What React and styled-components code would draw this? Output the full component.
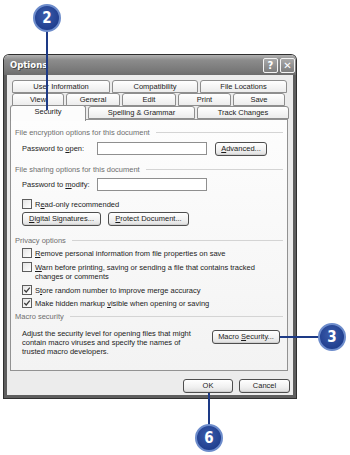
import styled, { createGlobalStyle } from "styled-components";

const GlobalStyle = createGlobalStyle`
  html, body {
    margin: 0;
    padding: 0;
    background: #ffffff;
  }
  * {
    box-sizing: border-box;
  }
`;

const Page = styled.div`
  position: relative;
  width: 350px;
  height: 455px;
  overflow: hidden;
  background: #ffffff;
  font-family: "Liberation Sans", Arial, sans-serif;
  font-size: 7.5px;
  line-height: 9px;
  color: #1c1c1c;
  padding: 55px 0 0 4px;
`;

const Window = styled.div`
  width: 292px;
  height: 343px;
  display: flex;
  flex-direction: column;
  border-radius: 5px 5px 0 0;
  box-shadow: 0 0 0 1px #2f2f2f;
`;

const TitleBar = styled.div`
  height: 20px;
  display: flex;
  align-items: center;
  justify-content: space-between;
  padding: 0 1px 0 6px;
  border-radius: 5px 5px 0 0;
  background: linear-gradient(#b2b2b2 0%, #8c8c8c 25%, #7b7b7b 70%, #6c6c6c 100%);
`;

const Title = styled.span`
  color: #ffffff;
  font-family: "DejaVu Sans", Verdana, sans-serif;
  font-weight: bold;
  font-size: 8.5px;
  text-shadow: 1px 1px 0 #4a4a4a;
`;

const TitleButtons = styled.div`
  display: flex;
  gap: 2px;
`;

const TitleButton = styled.div`
  width: 15px;
  height: 15px;
  border: 1px solid #f4f4f4;
  border-radius: 2px;
  background: linear-gradient(#a9a9a9, #7d7d7d);
  color: #ffffff;
  font-family: "DejaVu Sans", sans-serif;
  font-weight: bold;
  font-size: 10px;
  line-height: 13px;
  text-align: center;
`;

const Frame = styled.div`
  flex: 1;
  border: 3px solid #5e5e5e;
  border-top: none;
  background: #ececec;
  display: flex;
  flex-direction: column;
  padding: 5px 3px 0 3px;
`;

const TabRow = styled.div`
  display: flex;
  gap: 2px;
  padding-left: ${({ $indent }) => $indent}px;
  height: 13px;
  position: relative;
  z-index: ${({ $front }) => ($front ? 2 : 1)};
`;

const Tab = styled.div`
  width: ${({ $w }) => $w}px;
  height: ${({ $active }) => ($active ? 16 : 13)}px;
  margin-top: ${({ $active }) => ($active ? -1 : 0)}px;
  border: 1px solid #8e8e8e;
  border-bottom: ${({ $active }) => ($active ? "none" : "1px solid #8e8e8e")};
  border-radius: 3px 3px 0 0;
  background: ${({ $active }) =>
    $active ? "#fcfcfc" : "linear-gradient(#ffffff, #ececec)"};
  text-align: center;
  line-height: 11px;
  color: #222;
  white-space: nowrap;
`;

const Panel = styled.div`
  width: 278px;
  height: 252px;
  border: 1px solid #929292;
  background: linear-gradient(#fdfdfd, #f3f3f3);
  padding: 8px 4px 0 4px;
  display: flex;
  flex-direction: column;
`;

const GroupHeader = styled.div`
  display: flex;
  align-items: center;
  gap: 6px;
  color: #6e6e6e;
  margin-top: ${({ $mt }) => $mt}px;
  height: 9px;
  &::after {
    content: "";
    flex: 1;
    height: 1px;
    background: #d4d4d4;
  }
`;

const FieldRow = styled.div`
  display: flex;
  align-items: center;
  margin: ${({ $mt }) => $mt}px 0 0 7px;
  height: ${({ $h }) => $h || 15}px;
`;

const Label = styled.span`
  width: 75px;
  flex: none;
`;

const Input = styled.div`
  width: 110px;
  height: 13px;
  border: 1px solid #8f8f8f;
  background: #ffffff;
`;

const Button = styled.div`
  width: ${({ $w }) => $w}px;
  height: ${({ $h }) => $h || 14}px;
  margin-left: ${({ $ml }) => $ml || 0}px;
  margin-top: ${({ $mt }) => $mt || 0}px;
  flex: none;
  border: 1px solid #4e4e4e;
  border-radius: 3px;
  background: linear-gradient(#ffffff, #f0f0f0 60%, #dedede);
  box-shadow: inset 0 -1px 0 #d0d0d0;
  text-align: center;
  line-height: 12px;
  color: #1c1c1c;
  white-space: nowrap;
`;

const ButtonRow = styled.div`
  display: flex;
  gap: 7px;
  margin: ${({ $mt }) => $mt}px 0 0 7px;
`;

const CheckRow = styled.div`
  display: flex;
  align-items: flex-start;
  gap: 3px;
  margin: ${({ $mt }) => $mt}px 0 0 7px;
`;

const Box = styled.div`
  width: 10px;
  height: 10px;
  flex: none;
  border: 1px solid #5d5d5d;
  background: linear-gradient(135deg, #e4e4e4, #ffffff);
  display: flex;
  align-items: center;
  justify-content: center;
`;

const CheckText = styled.span`
  line-height: 9px;
  padding-top: 1px;
  width: ${({ $w }) => ($w ? `${$w}px` : "auto")};
`;

const MacroRow = styled.div`
  display: flex;
  align-items: flex-start;
  margin: 8px 0 0 7px;
`;

const MacroText = styled.div`
  width: 176px;
  margin-right: 14px;
  color: #1c1c1c;
`;

const Footer = styled.div`
  display: flex;
  justify-content: flex-end;
  gap: 6px;
  padding: 8px 0 0 0;
`;

const Callout = styled.div`
  position: absolute;
  left: ${({ $x }) => $x - 14}px;
  top: ${({ $y }) => $y - 14}px;
  width: 28px;
  height: 28px;
  border-radius: 50%;
  border: 2px solid #6d8ccb;
  background: radial-gradient(circle at 45% 40%, #3a5cab, #1f3d8d 75%);
  color: #ffffff;
  font-family: "DejaVu Sans Condensed", "DejaVu Sans", sans-serif;
  font-weight: bold;
  font-size: 15px;
  line-height: 24px;
  text-align: center;
  z-index: 5;
`;

const Leader = styled.div`
  position: absolute;
  left: ${({ $x }) => $x}px;
  top: ${({ $y }) => $y}px;
  width: ${({ $w }) => $w}px;
  height: ${({ $h }) => $h}px;
  background: #1d3a86;
  z-index: 4;
`;

const U = styled.span`
  text-decoration: underline;
`;

const Check = () => (
  <svg width="8" height="8" viewBox="0 0 8 8">
    <path d="M1.3 4 L3.2 6 L6.8 1.6" fill="none" stroke="#3a3a3a" strokeWidth="1.2" />
  </svg>
);

const CheckItem = ({ checked, mt, w, children }) => (
  <CheckRow $mt={mt}>
    <Box>{checked && <Check />}</Box>
    <CheckText $w={w}>{children}</CheckText>
  </CheckRow>
);

export default function App() {
  return (
    <Page>
      <GlobalStyle />
      <Window>
        <TitleBar>
          <Title>Options</Title>
          <TitleButtons>
            <TitleButton>?</TitleButton>
            <TitleButton>✕</TitleButton>
          </TitleButtons>
        </TitleBar>
        <Frame>
          <TabRow $indent={2}>
            <Tab $w={98}>User Information</Tab>
            <Tab $w={86}>Compatibility</Tab>
            <Tab $w={87}>File Locations</Tab>
          </TabRow>
          <TabRow $indent={2}>
            <Tab $w={52}>View</Tab>
            <Tab $w={54}>General</Tab>
            <Tab $w={54}>Edit</Tab>
            <Tab $w={53}>Print</Tab>
            <Tab $w={52}>Save</Tab>
          </TabRow>
          <TabRow $indent={0} $front>
            <Tab $w={76} $active>Security</Tab>
            <Tab $w={107}>Spelling &amp; Grammar</Tab>
            <Tab $w={92}>Track Changes</Tab>
          </TabRow>
          <Panel>
            <GroupHeader $mt={0}>File encryption options for this document</GroupHeader>
            <FieldRow $mt={4}>
              <Label>
                Password to <U>o</U>pen:
              </Label>
              <Input />
              <Button $w={52} $ml={8}>
                <U>A</U>dvanced...
              </Button>
            </FieldRow>
            <GroupHeader $mt={9}>File sharing options for this document</GroupHeader>
            <FieldRow $mt={3} $h={14}>
              <Label>
                Password to <U>m</U>odify:
              </Label>
              <Input />
            </FieldRow>
            <CheckItem mt={8}>
              R<U>e</U>ad-only recommended
            </CheckItem>
            <ButtonRow $mt={3}>
              <Button $w={79}>
                <U>D</U>igital Signatures...
              </Button>
              <Button $w={81}>
                <U>P</U>rotect Document...
              </Button>
            </ButtonRow>
            <GroupHeader $mt={10}>Privacy options</GroupHeader>
            <CheckItem mt={3}>
              <U>R</U>emove personal information from file properties on save
            </CheckItem>
            <CheckItem mt={4} w={230}>
              <U>W</U>arn before printing, saving or sending a file that contains tracked
              changes or comments
            </CheckItem>
            <CheckItem mt={4} checked>
              S<U>t</U>ore random number to improve merge accuracy
            </CheckItem>
            <CheckItem mt={3} checked>
              Make hidden markup <U>v</U>isible when opening or saving
            </CheckItem>
            <GroupHeader $mt={4}>Macro security</GroupHeader>
            <MacroRow>
              <MacroText>
                Adjust the security level for opening files that might contain macro
                viruses and specify the names of trusted macro developers.
              </MacroText>
              <Button $w={68} $mt={1}>
                Macro <U>S</U>ecurity...
              </Button>
            </MacroRow>
          </Panel>
          <Footer>
            <Button $w={50}>OK</Button>
            <Button $w={51}>Cancel</Button>
          </Footer>
        </Frame>
      </Window>

      <Leader $x={46} $y={30} $w={2} $h={80} />
      <Callout $x={47} $y={18}>2</Callout>

      <Leader $x={280} $y={336} $w={40} $h={2} />
      <Callout $x={332} $y={337}>3</Callout>

      <Leader $x={208} $y={393} $w={2} $h={33} />
      <Callout $x={209} $y={438}>6</Callout>
    </Page>
  );
}
